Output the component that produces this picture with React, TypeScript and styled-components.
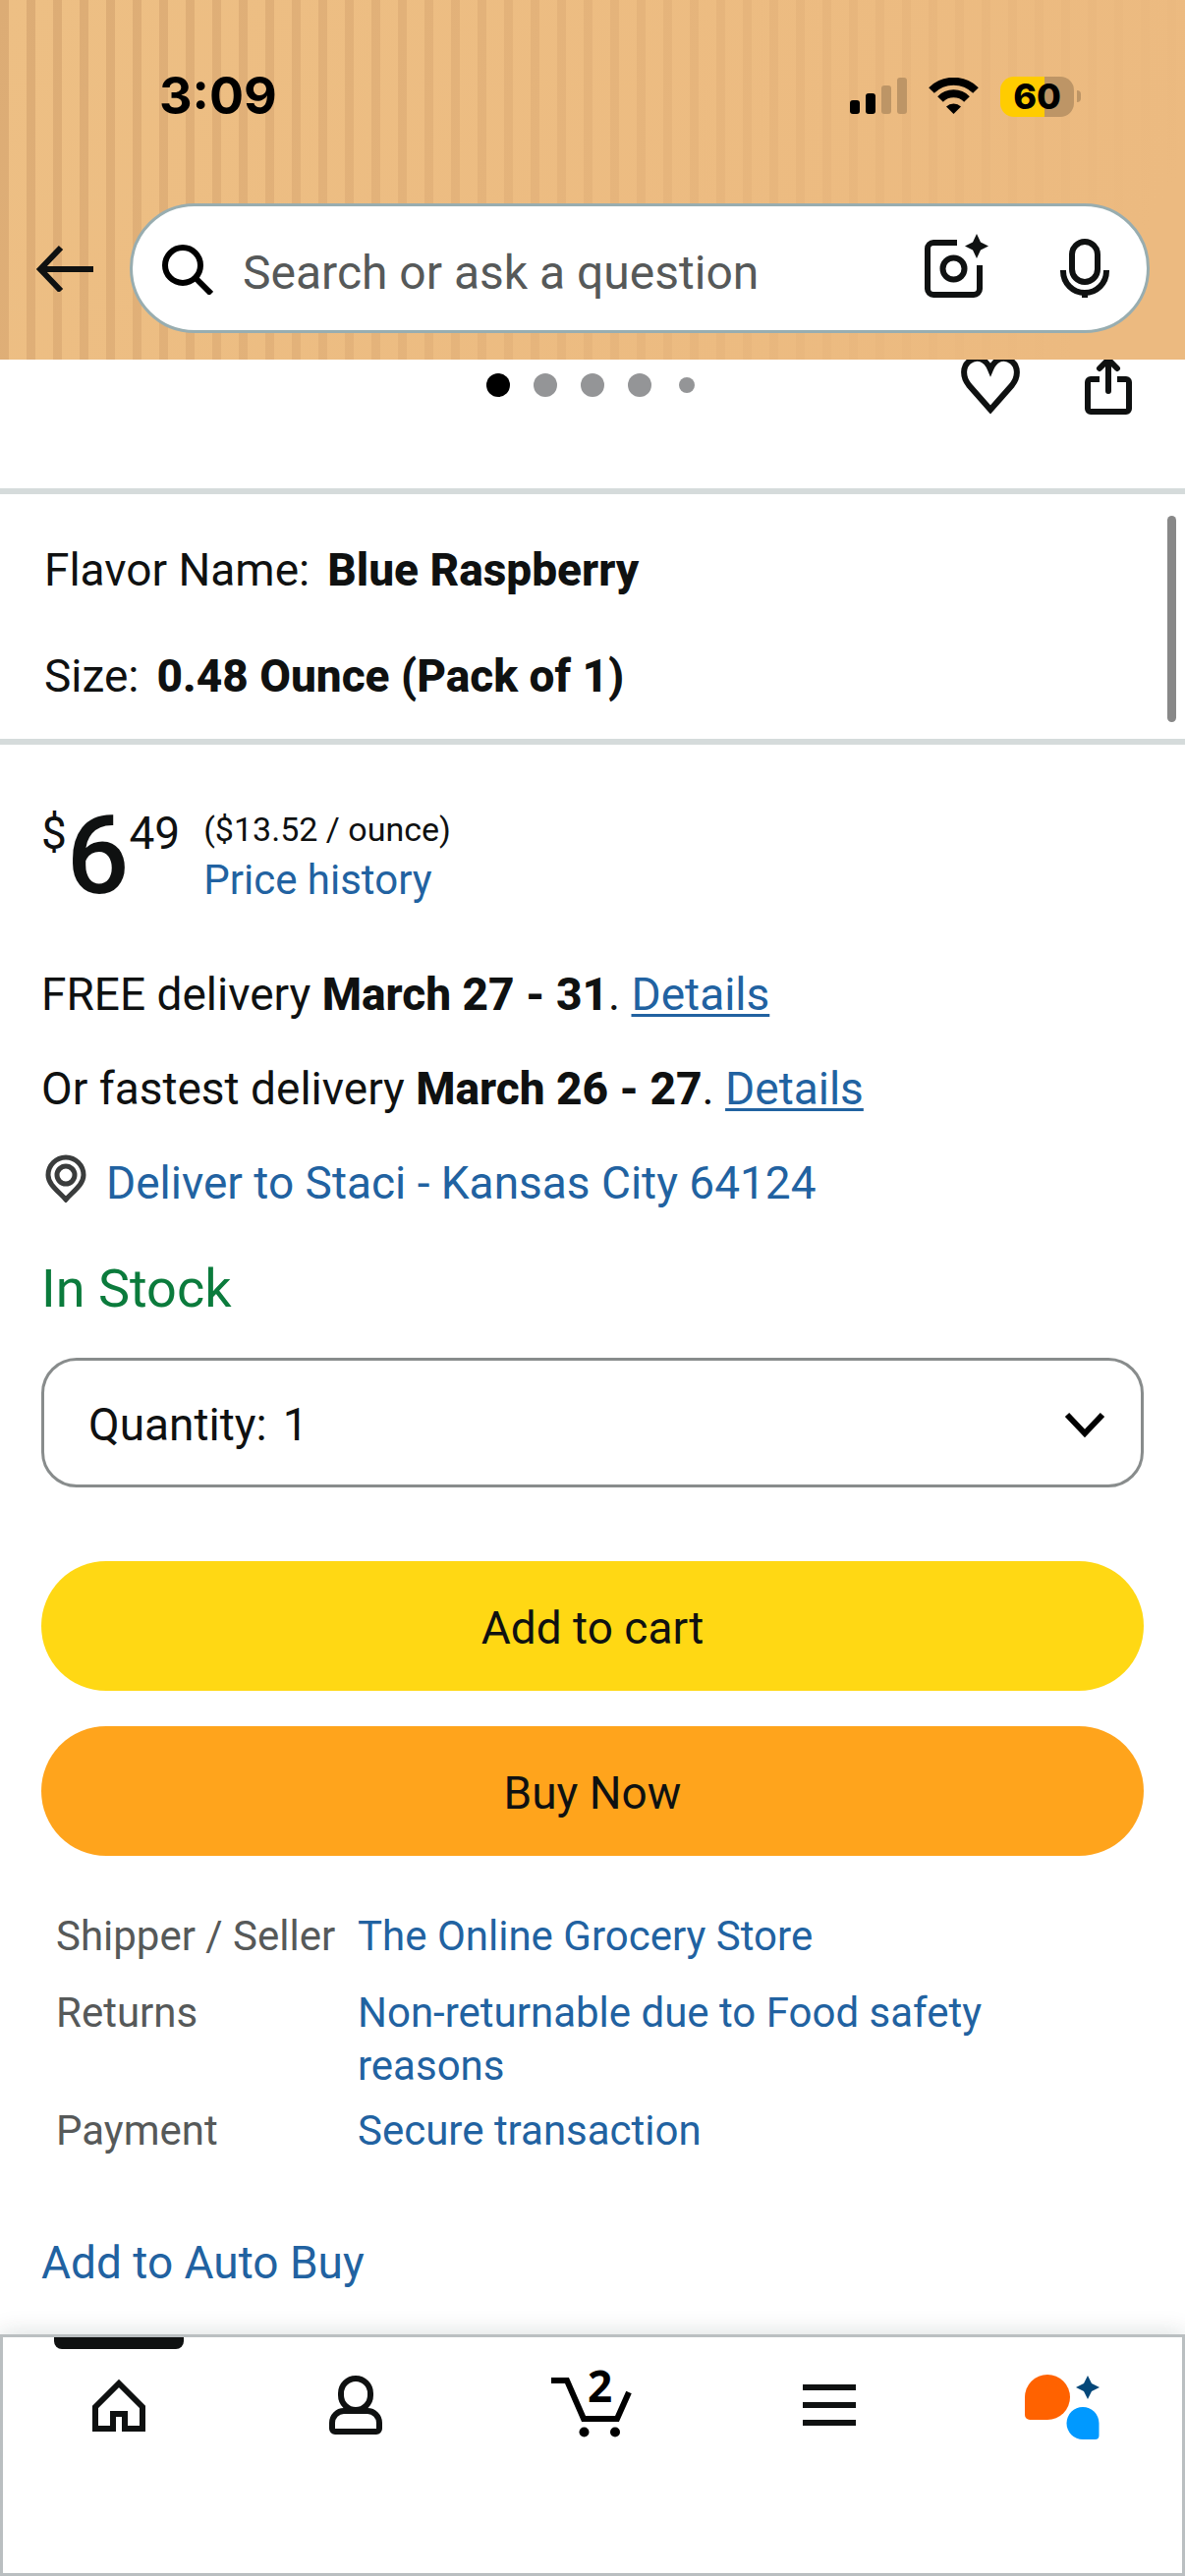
import React from "react";
import styled, { createGlobalStyle } from "styled-components";

const GlobalStyle = createGlobalStyle`
  *, *::before, *::after { box-sizing: border-box; }
  body {
    margin: 0;
    background: #fff;
    color: #0f1111;
    font-family: Roboto, "Noto Sans", sans-serif;
    font-size: 46px;
    line-height: 60px;
  }
  button, input, select { font: inherit; color: inherit; }
`;

const Screen = styled.div`
  display: flex;
  flex-direction: column;
  min-height: 100vh;
`;

/* ---------- header ---------- */

const Header = styled.header`
  background:
    linear-gradient(120deg, rgba(236, 186, 128, 0) 0%, rgba(236, 186, 128, 0.55) 45%, #ecba80 92%),
    repeating-linear-gradient(90deg, #dcac75 0 9px, #edbf84 9px 27px);
`;

const StatusBar = styled.div`
  display: flex;
  align-items: center;
  justify-content: space-between;
  height: 196px;
  padding: 0 106px 0 162px;
  color: #000;
  font-family: Inter, sans-serif;
`;

const Clock = styled.time`
  font-size: 52px;
  font-weight: 700;
`;

const StatusIcons = styled.div`
  display: flex;
  align-items: center;
  gap: 22px;
`;

const Battery = styled.div`
  display: flex;
  align-items: center;
  gap: 3px;

  &::after {
    content: "";
    width: 4px;
    height: 12px;
    border-radius: 0 6px 6px 0;
    background: #bd9566;
  }
`;

const BatteryLevel = styled.div`
  width: 75px;
  height: 41px;
  border-radius: 14px;
  background: linear-gradient(90deg, #ffcc00 60%, #bd9566 60%);
  font-size: 36px;
  font-weight: 800;
  line-height: 41px;
  text-align: center;
`;

const SearchRow = styled.div`
  display: flex;
  align-items: center;
  gap: 36px;
  padding: 11px 36px 27px;
`;

const IconButton = styled.button`
  display: flex;
  flex: none;
  padding: 0;
  border: 0;
  background: none;
`;

const SearchBox = styled.form`
  display: flex;
  flex: 1;
  align-items: center;
  gap: 30px;
  min-width: 0;
  height: 132px;
  padding: 0 38px 0 30px;
  border: 3px solid #98adb0;
  border-radius: 66px;
  background: #fff;
`;

const SearchInput = styled.input`
  flex: 1;
  min-width: 0;
  padding: 10px 0 0;
  border: 0;
  outline: 0;
  background: none;
  font-size: 48px;

  &::placeholder {
    color: #565959;
    opacity: 1;
  }
`;

const SearchTools = styled.div`
  display: flex;
  align-items: center;
  gap: 73px;
`;

/* ---------- gallery footer ---------- */

const GalleryBar = styled.div`
  display: grid;
  grid-template-columns: 1fr auto 1fr;
  align-items: start;
  height: 131px;
  padding: 0 54px;
`;

const Dots = styled.div`
  display: flex;
  grid-column: 2;
  align-items: center;
  padding-top: 14px;
`;

const Dot = styled.span<{ $active?: boolean; $small?: boolean }>`
  width: ${(p) => (p.$small ? 16 : 24)}px;
  height: ${(p) => (p.$small ? 16 : 24)}px;
  margin: 0 ${(p) => (p.$small ? 16 : 12)}px;
  border-radius: 50%;
  background: ${(p) => (p.$active ? "#000" : "#949597")};
`;

const GalleryActions = styled.div`
  display: flex;
  justify-content: flex-end;
  gap: 66px;
`;

/* ---------- options ---------- */

const Options = styled.dl`
  position: relative;
  display: flex;
  flex-direction: column;
  gap: 48px;
  margin: 0;
  padding: 47px 45px 34px;
  border: solid #d5dbdb;
  border-width: 6px 0;

  &::after {
    content: "";
    position: absolute;
    top: 22px;
    right: 9px;
    bottom: 17px;
    width: 9px;
    border-radius: 5px;
    background: #888;
  }
`;

const Option = styled.div`
  display: flex;
  gap: 18px;

  dt, dd { margin: 0; }
  dd { font-weight: 800; }
`;

/* ---------- buy box ---------- */

const Main = styled.main`
  flex: 1;
`;

const BuyBox = styled.section`
  padding: 60px 42px 42px;
`;

const PriceRow = styled.div`
  display: flex;
  align-items: flex-start;
  gap: 24px;
`;

const Price = styled.div`
  display: flex;
  align-items: flex-start;
`;

const PriceWhole = styled.span`
  font-size: 112px;
  font-weight: 500;
  line-height: 106px;
`;

const PriceNotes = styled.div`
  display: flex;
  flex-direction: column;
`;

const UnitPrice = styled.span`
  font-size: 34px;
  line-height: 52px;
`;

const Link = styled.a<{ $underline?: boolean; $small?: boolean }>`
  color: #2162a1;
  font-size: ${(p) => (p.$small ? "42px" : "inherit")};
  line-height: ${(p) => (p.$small ? "52px" : "inherit")};
  text-decoration: ${(p) => (p.$underline ? "underline" : "none")};
  text-decoration-thickness: 3px;
  text-underline-offset: 4px;
`;

const Delivery = styled.div`
  display: flex;
  flex-direction: column;
  gap: 36px;
  margin-top: 58px;

  p { margin: 0; }
  b { font-weight: 800; }
`;

const Location = styled.div`
  display: flex;
  align-items: flex-start;
  gap: 18px;
`;

const Stock = styled.p`
  margin: 45px 0 37px;
  color: #0b7b3c;
  font-size: 54px;
  line-height: 66px;
`;

const QuantityBox = styled.div`
  display: flex;
  align-items: center;
  gap: 16px;
  height: 132px;
  padding: 3px 36px 0 45px;
  border: 3px solid #888c8c;
  border-radius: 36px;
`;

const QuantitySelect = styled.select`
  flex: 1;
  padding: 0;
  border: 0;
  outline: 0;
  background: none;
  appearance: none;
`;

const Actions = styled.div`
  display: flex;
  flex-direction: column;
  gap: 36px;
  margin-top: 75px;
`;

const PillButton = styled.button<{ $color: string }>`
  height: 132px;
  padding: 3px 0 0;
  border: 0;
  border-radius: 66px;
  background: ${(p) => p.$color};
`;

const Facts = styled.table`
  width: 100%;
  margin: 55px 0 65px;
  border-collapse: collapse;
  font-size: 42px;
  line-height: 54px;

  th, td {
    padding: 0 60px 12px 0;
    text-align: left;
    vertical-align: top;
  }
  th {
    width: 322px;
    padding: 0 0 12px 15px;
    color: #565959;
    font-weight: 400;
    white-space: nowrap;
  }
  tr:first-child > * { padding-bottom: 24px; }
`;

/* ---------- tab bar ---------- */

const TabBar = styled.nav`
  display: grid;
  grid-template-columns: repeat(5, 1fr);
  height: 246px;
  padding-top: 3px;
  background: #fff;
  box-shadow: inset 0 0 0 3px #babfc1, 0 0 24px rgba(15, 40, 40, 0.16);
`;

const Tab = styled.a<{ $active?: boolean }>`
  display: flex;
  flex-direction: column;
  align-items: center;
  gap: 15px;
  color: #0f1111;

  &::before {
    content: "";
    width: 132px;
    height: 12px;
    border-radius: 0 0 8px 8px;
    background: ${(p) => (p.$active ? "currentColor" : "transparent")};
  }
`;

const CartIcon = styled.span`
  position: relative;
  display: flex;
`;

const CartCount = styled.span`
  position: absolute;
  top: 6px;
  left: 37px;
  color: #000;
  font-family: "Noto Sans", sans-serif;
  font-size: 44px;
  font-weight: 700;
  line-height: 32px;
`;

/* ---------- drawings ---------- */

const stroke = { fill: "none", stroke: "#0f1111", strokeWidth: 6 } as const;

const SignalIcon = () => (
  <svg width="58" height="38" viewBox="0 0 58 38" aria-hidden="true">
    <rect x="0" y="23" width="10" height="14" rx="3" />
    <rect x="16" y="16" width="10" height="21" rx="3" />
    <rect x="32" y="8" width="10" height="29" rx="3" fill="#bd9566" />
    <rect x="48" y="0" width="10" height="37" rx="3" fill="#bd9566" />
  </svg>
);

const WifiIcon = () => (
  <svg width="51" height="38" viewBox="0 0 51 38" aria-hidden="true">
    <path d="M3 13a32 32 0 0 1 45 0" fill="none" stroke="#000" strokeWidth="8" />
    <path d="M12 22a19 19 0 0 1 27 0" fill="none" stroke="#000" strokeWidth="8" />
    <path d="M25.500 37L18 29.500a11 11 0 0 1 15 0z" />
  </svg>
);

const BackIcon = () => (
  <svg width="60" height="48" viewBox="0 0 60 48" aria-hidden="true">
    <path {...stroke} d="M59 25H4M26 3L5 25l21 22" />
  </svg>
);

const SearchIcon = () => (
  <svg width="52" height="54" viewBox="0 0 52 54" aria-hidden="true">
    <circle cx="21" cy="24" r="18" fill="none" stroke="#000" strokeWidth="6" />
    <path d="M34 37l16 16" stroke="#000" strokeWidth="6" />
  </svg>
);

const LensIcon = () => (
  <svg width="65" height="70" viewBox="0 0 65 70" aria-hidden="true">
    <path {...stroke} d="M33 9H9a6 6 0 0 0-6 6v41a6 6 0 0 0 6 6h41a6 6 0 0 0 6-6V32" />
    <circle {...stroke} cx="29.500" cy="35.500" r="11" />
    <path d="M53 0l4 8.500 8 4-8 4-4 8.500-4-8.500-8-4 8-4z" fill="#0f1111" />
  </svg>
);

const MicIcon = () => (
  <svg width="50" height="60" viewBox="0 0 50 60" aria-hidden="true">
    <rect {...stroke} x="12" y="3" width="26" height="41" rx="13" />
    <path {...stroke} d="M3 32v1a22 22 0 0 0 44 0v-1M25 54v6" />
  </svg>
);

const HeartIcon = () => (
  <svg width="60" height="56" viewBox="0 0 60 56" aria-hidden="true">
    <path {...stroke} d="M30 51L8 26C1 17 2 7 8 2c7-6 17-4 22 8 5-12 15-14 22-8 6 5 7 15 0 24z" />
  </svg>
);

const ShareIcon = () => (
  <svg width="48" height="56" viewBox="0 0 48 56" aria-hidden="true">
    <path {...stroke} d="M15 20H6a3 3 0 0 0-3 3v27a3 3 0 0 0 3 3h36a3 3 0 0 0 3-3V23a3 3 0 0 0-3-3h-9" />
    <path {...stroke} strokeLinecap="round" d="M24 2v30M15 9l9-9 9 9" />
  </svg>
);

const PinIcon = () => (
  <svg width="48" height="50" viewBox="-4 -2 48 50" aria-hidden="true">
    <path
      d="M21 45C14 37 3 30 3 20a18 18 0 0 1 36 0c0 10-11 17-18 25z"
      fill="none"
      stroke="#3a3c3c"
      strokeWidth="5"
    />
    <circle cx="21" cy="20" r="9" fill="none" stroke="#3a3c3c" strokeWidth="5" />
  </svg>
);

const ChevronIcon = () => (
  <svg width="42" height="28" viewBox="0 0 42 28" aria-hidden="true">
    <path d="M3 4l18 19L39 4" fill="none" stroke="#000" strokeWidth="6" />
  </svg>
);

const HomeIcon = () => (
  <svg width="54" height="84" viewBox="0 0 54 84" aria-hidden="true">
    <path {...stroke} d="M3 66V44L27 20l24 24v22H33V51H21v15z" strokeLinejoin="miter" />
  </svg>
);

const PersonIcon = () => (
  <svg width="54" height="84" viewBox="0 0 54 84" aria-hidden="true">
    <rect {...stroke} x="12" y="15" width="30" height="32" rx="15" />
    <path
      {...stroke}
      fill="#fff"
      d="M15 48h24a12 12 0 0 1 12 12v6a3 3 0 0 1-3 3H6a3 3 0 0 1-3-3v-6a12 12 0 0 1 12-12z"
    />
  </svg>
);

const CartDrawing = () => (
  <svg width="84" height="84" viewBox="0 0 84 84" aria-hidden="true">
    <path d="M0 17h16l17 39h34l12-27" fill="none" stroke="#000" strokeWidth="6" />
    <circle cx="33.500" cy="69.500" r="5" />
    <circle cx="65" cy="69.500" r="5" />
  </svg>
);

const MenuIcon = () => (
  <svg width="54" height="84" viewBox="0 0 54 84" aria-hidden="true">
    <path {...stroke} d="M0 24h54M0 42h54M0 60h54" />
  </svg>
);

const AssistantIcon = () => (
  <svg width="84" height="84" viewBox="0 0 84 84" aria-hidden="true">
    <path d="M23 11a23 23 0 0 1 0 46H5a5 5 0 0 1-5-5V34a23 23 0 0 1 23-23z" fill="#ff6200" />
    <path d="M59 44a16.500 16.500 0 0 1 16.500 16.500V73a4 4 0 0 1-4 4H59a16.500 16.500 0 0 1 0-33z" fill="#0099ff" />
    <path d="M64 12l4 8 8 4-8 4-4 8-4-8-8-4 8-4z" fill="#044779" />
  </svg>
);

/* ---------- page ---------- */

const facts = [
  { name: "Shipper / Seller", value: "The Online Grocery Store" },
  { name: "Returns", value: "Non-returnable due to Food safety reasons" },
  { name: "Payment", value: "Secure transaction" },
];

export default function App() {
  return (
    <Screen>
      <GlobalStyle />
      <Header>
        <StatusBar>
          <Clock>3:09</Clock>
          <StatusIcons>
            <SignalIcon />
            <WifiIcon />
            <Battery>
              <BatteryLevel>60</BatteryLevel>
            </Battery>
          </StatusIcons>
        </StatusBar>
        <SearchRow>
          <IconButton type="button" aria-label="Back">
            <BackIcon />
          </IconButton>
          <SearchBox role="search">
            <SearchIcon />
            <SearchInput type="text" aria-label="Search" placeholder="Search or ask a question" />
            <SearchTools>
              <IconButton type="button" aria-label="Search by camera">
                <LensIcon />
              </IconButton>
              <IconButton type="button" aria-label="Search by voice">
                <MicIcon />
              </IconButton>
            </SearchTools>
          </SearchBox>
        </SearchRow>
      </Header>

      <Main>
        <GalleryBar>
          <Dots>
            <Dot $active />
            <Dot />
            <Dot />
            <Dot />
            <Dot $small />
          </Dots>
          <GalleryActions>
            <IconButton type="button" aria-label="Add to list">
              <HeartIcon />
            </IconButton>
            <IconButton type="button" aria-label="Share">
              <ShareIcon />
            </IconButton>
          </GalleryActions>
        </GalleryBar>

        <Options>
          <Option>
            <dt>Flavor Name:</dt>
            <dd>Blue Raspberry</dd>
          </Option>
          <Option>
            <dt>Size:</dt>
            <dd>0.48 Ounce (Pack of 1)</dd>
          </Option>
        </Options>

        <BuyBox>
          <PriceRow>
            <Price>
              <span>$</span>
              <PriceWhole>6</PriceWhole>
              <span>49</span>
            </Price>
            <PriceNotes>
              <UnitPrice>($13.52 / ounce)</UnitPrice>
              <Link href="#price-history" $small>Price history</Link>
            </PriceNotes>
          </PriceRow>

          <Delivery>
            <p>
              FREE delivery <b>March 27 - 31</b>. <Link href="#free-delivery" $underline>Details</Link>
            </p>
            <p>
              Or fastest delivery <b>March 26 - 27</b>. <Link href="#fast-delivery" $underline>Details</Link>
            </p>
            <Location>
              <PinIcon />
              <Link href="#location">Deliver to Staci - Kansas City 64124</Link>
            </Location>
          </Delivery>

          <Stock>In Stock</Stock>

          <QuantityBox>
            <label htmlFor="quantity">Quantity:</label>
            <QuantitySelect id="quantity" defaultValue="1">
              <option>1</option>
              <option>2</option>
              <option>3</option>
            </QuantitySelect>
            <ChevronIcon />
          </QuantityBox>

          <Actions>
            <PillButton type="button" $color="#ffd814">Add to cart</PillButton>
            <PillButton type="button" $color="#ffa41c">Buy Now</PillButton>
          </Actions>

          <Facts>
            <tbody>
              {facts.map((fact) => (
                <tr key={fact.name}>
                  <th scope="row">{fact.name}</th>
                  <td>
                    <Link href="#details">{fact.value}</Link>
                  </td>
                </tr>
              ))}
            </tbody>
          </Facts>

          <Link href="#auto-buy">Add to Auto Buy</Link>
        </BuyBox>
      </Main>

      <TabBar>
        <Tab href="#home" aria-label="Home" $active>
          <HomeIcon />
        </Tab>
        <Tab href="#account" aria-label="Account">
          <PersonIcon />
        </Tab>
        <Tab href="#cart" aria-label="Cart">
          <CartIcon>
            <CartDrawing />
            <CartCount>2</CartCount>
          </CartIcon>
        </Tab>
        <Tab href="#menu" aria-label="Menu">
          <MenuIcon />
        </Tab>
        <Tab href="#assistant" aria-label="Assistant">
          <AssistantIcon />
        </Tab>
      </TabBar>
    </Screen>
  );
}
